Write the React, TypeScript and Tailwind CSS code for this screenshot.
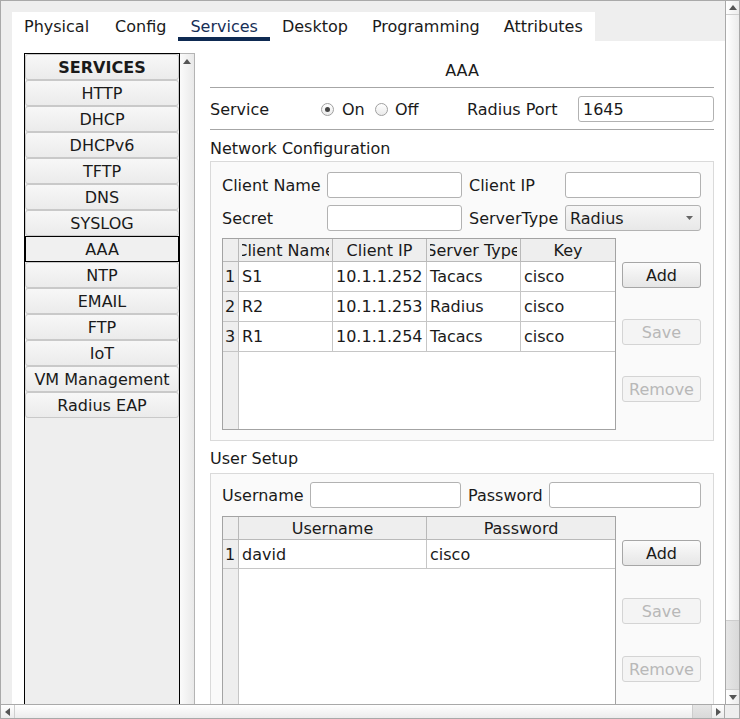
import React from "react";

const tabs = ["Physical", "Config", "Services", "Desktop", "Programming", "Attributes"];
const services = ["HTTP", "DHCP", "DHCPv6", "TFTP", "DNS", "SYSLOG", "AAA", "NTP", "EMAIL", "FTP", "IoT", "VM Management", "Radius EAP"];

function UpArrow() {
  return (
    <svg width="8" height="5" viewBox="0 0 8 5"><path d="M0 5 L4 0 L8 5 Z" fill="#555" /></svg>
  );
}
function DownArrow() {
  return (
    <svg width="8" height="5" viewBox="0 0 8 5"><path d="M0 0 L4 5 L8 0 Z" fill="#555" /></svg>
  );
}
function LeftArrow() {
  return (
    <svg width="5" height="8" viewBox="0 0 5 8"><path d="M5 0 L0 4 L5 8 Z" fill="#555" /></svg>
  );
}
function RightArrow() {
  return (
    <svg width="5" height="8" viewBox="0 0 5 8"><path d="M0 0 L5 4 L0 8 Z" fill="#555" /></svg>
  );
}

function Btn({ label, disabled }: { label: string; disabled?: boolean }) {
  return (
    <div
      className={
        disabled
          ? "h-[26px] w-[79px] flex items-center justify-center rounded-[3px] border border-[#d4d4d4] bg-[#f4f4f4] text-[#b8b8b8]"
          : "h-[26px] w-[79px] flex items-center justify-center rounded-[3px] border border-[#a6a6a6] bg-gradient-to-b from-[#fbfbfb] to-[#e6e6e6] text-[#1a1a1a]"
      }
    >
      {label}
    </div>
  );
}

function Input({ w, value }: { w: string; value?: string }) {
  return (
    <div className={`${w} h-[26px] shrink-0 rounded-[3px] border border-[#b2b2b2] bg-white flex items-center pl-[4px]`}>{value}</div>
  );
}

function Radio({ checked }: { checked?: boolean }) {
  return (
    <div className="w-[13px] h-[13px] shrink-0 rounded-full border border-[#a0a0a0] bg-gradient-to-b from-white to-[#eaeaea] flex items-center justify-center">
      {checked ? <div className="w-[5px] h-[5px] rounded-full bg-[#444]" /> : null}
    </div>
  );
}

function HeadCell({ w, children, last }: { w?: string; children: React.ReactNode; last?: boolean }) {
  return (
    <div
      className={`${w ?? "flex-1"} h-full shrink-0 px-[3px] flex ${last ? "" : "border-r border-[#b9b9b9]"}`}
    >
      <div className="flex-1 h-full flex items-center justify-center overflow-hidden whitespace-nowrap">{children}</div>
    </div>
  );
}

function Cell({ w, children, last }: { w?: string; children: React.ReactNode; last?: boolean }) {
  return (
    <div
      className={`${w ?? "flex-1"} h-full shrink-0 flex items-center pl-[3px] overflow-hidden whitespace-nowrap ${last ? "" : "border-r border-[#c6c6c6]"}`}
    >
      {children}
    </div>
  );
}

function RowHead({ n }: { n?: string }) {
  return (
    <div className="w-[16px] h-full shrink-0 bg-[#eeeeee] border-r border-[#b9b9b9] flex items-center pl-[2px]">{n}</div>
  );
}

export default function App() {
  const netRows = [
    ["1", "S1", "10.1.1.252", "Tacacs", "cisco"],
    ["2", "R2", "10.1.1.253", "Radius", "cisco"],
    ["3", "R1", "10.1.1.254", "Tacacs", "cisco"],
  ];
  return (
    <div className="w-[740px] h-[719px] overflow-hidden flex flex-col font-['DejaVu_Sans',sans-serif] text-[16px] leading-[19px] text-[#1a1a1a]">
      <div className="flex h-[704px] shrink-0">
        {/* viewport */}
        <div className="w-[725px] h-[704px] overflow-hidden bg-[#eeeeee] border-l border-t border-[#a9a9a9] pl-[11px] pt-[11px] flex flex-col">
          {/* tabs */}
          <div className="flex h-[29px] shrink-0">
            <div className="flex bg-white h-full">
              {tabs.map((t) => (
                <div
                  key={t}
                  className={
                    t === "Services"
                      ? "h-full px-[12px] pt-[3px] flex items-center border-b-4 border-[#0e2a52] text-[#172f57]"
                      : t === "Physical"
                      ? "h-full pl-[12px] pr-[14px] pt-[3px] flex items-center border-b-4 border-transparent"
                      : "h-full px-[12px] pt-[3px] flex items-center border-b-4 border-transparent"
                  }
                >
                  {t}
                </div>
              ))}
            </div>
          </div>
          {/* content */}
          <div className="flex-1 bg-white flex items-start pl-[12px] pt-[12px] min-h-0 overflow-hidden">
            {/* service list */}
            <div className="w-[156px] h-[680px] shrink-0 border-l border-r border-t border-black bg-[#eeeeee] flex flex-col">
              <div className="h-[26px] shrink-0 flex items-center justify-center font-bold rounded-[3px] border border-[#c9c9c9] bg-gradient-to-b from-[#f7f7f7] to-[#ebebeb]">
                SERVICES
              </div>
              {services.map((s) => (
                <div
                  key={s}
                  className={
                    s === "AAA"
                      ? "h-[26px] shrink-0 flex items-center justify-center border border-black bg-[#f0f0f0]"
                      : "h-[26px] shrink-0 flex items-center justify-center rounded-[3px] border border-[#c9c9c9] bg-gradient-to-b from-[#f7f7f7] to-[#ebebeb]"
                  }
                >
                  {s}
                </div>
              ))}
            </div>
            {/* list scrollbar */}
            <div className="w-[15px] h-[680px] shrink-0 border-r border-t border-[#b4b4b4] bg-gradient-to-r from-[#fbfbfb] to-[#e9e9e9] flex flex-col">
              <div className="h-[14px] shrink-0 flex items-center justify-center">
                <UpArrow />
              </div>
            </div>
            {/* right column */}
            <div className="w-[504px] ml-[15px] shrink-0 flex flex-col">
              <div className="h-[34px] shrink-0 flex items-center justify-center">AAA</div>
              <div className="h-px shrink-0 bg-[#a6a6a6]" />
              <div className="mt-[8px] h-[26px] shrink-0 flex items-center">
                <div className="w-[111px] shrink-0">Service</div>
                <div className="w-[54px] shrink-0 flex items-center">
                  <Radio checked />
                  <span className="ml-[8px]">On</span>
                </div>
                <div className="w-[92px] shrink-0 flex items-center">
                  <Radio />
                  <span className="ml-[7px]">Off</span>
                </div>
                <div className="w-[111px] shrink-0">Radius Port</div>
                <Input w="w-[136px]" value="1645" />
              </div>
              <div className="mt-[7px] h-px shrink-0 bg-[#a6a6a6]" />
              <div className="h-[31px] shrink-0 pt-[5px] flex items-center">Network Configuration</div>
              {/* network panel */}
              <div className="shrink-0 border border-[#dadada] bg-[#fafafa] pt-[10px] pl-[11px] pr-[12px] pb-[10px] flex flex-col">
                <div className="flex items-center h-[26px] shrink-0">
                  <div className="w-[105px] shrink-0">Client Name</div>
                  <Input w="w-[135px]" />
                  <div className="w-[96px] shrink-0 ml-[7px]">Client IP</div>
                  <Input w="w-[136px]" />
                </div>
                <div className="flex items-center h-[26px] shrink-0 mt-[7px]">
                  <div className="w-[105px] shrink-0">Secret</div>
                  <Input w="w-[135px]" />
                  <div className="w-[96px] shrink-0 ml-[7px]">ServerType</div>
                  <div className="w-[136px] h-[26px] shrink-0 rounded-[3px] border border-[#b2b2b2] bg-gradient-to-b from-[#f6f6f6] to-[#e8e8e8] flex items-center justify-between pl-[4px] pr-[7px]">
                    <span>Radius</span>
                    <svg width="7" height="4" viewBox="0 0 7 4"><path d="M0 0 L3.5 4 L7 0 Z" fill="#666" /></svg>
                  </div>
                </div>
                <div className="flex mt-[7px] shrink-0">
                  <div className="w-[394px] h-[192px] shrink-0 border border-[#a3a3a3] bg-white flex flex-col overflow-hidden">
                    <div className="flex h-[23px] shrink-0 bg-[#eeeeee] border-b border-[#b9b9b9]">
                      <div className="w-[16px] h-full shrink-0 border-r border-[#b9b9b9]" />
                      <HeadCell w="w-[94px]">Client Name</HeadCell>
                      <HeadCell w="w-[94px]">Client IP</HeadCell>
                      <HeadCell w="w-[94px]">Server Type</HeadCell>
                      <HeadCell last>Key</HeadCell>
                    </div>
                    {netRows.map((r) => (
                      <div key={r[0]} className="flex h-[30px] shrink-0 border-b border-[#c6c6c6]">
                        <RowHead n={r[0]} />
                        <Cell w="w-[94px]">{r[1]}</Cell>
                        <Cell w="w-[94px]">{r[2]}</Cell>
                        <Cell w="w-[94px]">{r[3]}</Cell>
                        <Cell last>{r[4]}</Cell>
                      </div>
                    ))}
                    <div className="flex-1 flex">
                      <div className="w-[16px] h-full bg-[#eeeeee] border-r border-[#c6c6c6]" />
                    </div>
                  </div>
                  <div className="ml-[6px] flex flex-col shrink-0">
                    <div className="mt-[24px]">
                      <Btn label="Add" />
                    </div>
                    <div className="mt-[31px]">
                      <Btn label="Save" disabled />
                    </div>
                    <div className="mt-[31px]">
                      <Btn label="Remove" disabled />
                    </div>
                  </div>
                </div>
              </div>
              <div className="h-[32px] shrink-0 pt-[3px] flex items-center">User Setup</div>
              {/* user panel */}
              <div className="shrink-0 border-l border-r border-t border-[#dadada] bg-[#fafafa] pt-[8px] pl-[11px] pr-[12px] h-[260px] flex flex-col">
                <div className="flex items-center h-[26px] shrink-0">
                  <div className="w-[88px] shrink-0">Username</div>
                  <Input w="w-[151px]" />
                  <div className="w-[81px] shrink-0 ml-[7px]">Password</div>
                  <Input w="w-[152px]" />
                </div>
                <div className="flex mt-[8px] shrink-0">
                  <div className="w-[394px] h-[220px] shrink-0 border border-[#a3a3a3] bg-white flex flex-col overflow-hidden">
                    <div className="flex h-[23px] shrink-0 bg-[#eeeeee] border-b border-[#b9b9b9]">
                      <div className="w-[16px] h-full shrink-0 border-r border-[#b9b9b9]" />
                      <HeadCell w="w-[188px]">Username</HeadCell>
                      <HeadCell last>Password</HeadCell>
                    </div>
                    <div className="flex h-[29px] shrink-0 border-b border-[#c6c6c6]">
                      <RowHead n="1" />
                      <Cell w="w-[188px]">david</Cell>
                      <Cell last>cisco</Cell>
                    </div>
                    <div className="flex-1 flex">
                      <div className="w-[16px] h-full bg-[#eeeeee] border-r border-[#c6c6c6]" />
                    </div>
                  </div>
                  <div className="ml-[6px] flex flex-col shrink-0">
                    <div className="mt-[24px]">
                      <Btn label="Add" />
                    </div>
                    <div className="mt-[32px]">
                      <Btn label="Save" disabled />
                    </div>
                    <div className="mt-[32px]">
                      <Btn label="Remove" disabled />
                    </div>
                  </div>
                </div>
              </div>
            </div>
          </div>
        </div>
        {/* vertical scrollbar */}
        <div className="w-[15px] h-[704px] shrink-0 border-l border-r border-t border-[#a9a9a9] bg-gradient-to-r from-white to-[#ececec] flex flex-col">
          <div className="h-[14px] shrink-0 flex items-center justify-center border-b border-[#cfcfcf]">
            <UpArrow />
          </div>
          <div className="flex-1" />
          <div className="h-[70px] shrink-0 border-y border-[#cdcdcd] bg-gradient-to-r from-[#e6e6e6] to-[#d9d9d9]" />
          <div className="h-[14px] shrink-0 flex items-center justify-center">
            <DownArrow />
          </div>
        </div>
      </div>
      {/* bottom scrollbar */}
      <div className="flex h-[15px] shrink-0">
        <div className="w-[725px] h-full border border-[#a9a9a9] bg-gradient-to-b from-white to-[#ececec] flex">
          <div className="w-[14px] h-full flex items-center justify-center border-r border-[#cfcfcf]">
            <LeftArrow />
          </div>
          <div className="flex-1" />
          <div className="w-[20px] h-full border-x border-[#cdcdcd] bg-gradient-to-b from-[#e6e6e6] to-[#d9d9d9]" />
          <div className="w-[12px] h-full flex items-center justify-center">
            <RightArrow />
          </div>
        </div>
        <div className="w-[15px] h-full bg-[#eeeeee] border-y border-r border-[#a9a9a9]" />
      </div>
    </div>
  );
}
